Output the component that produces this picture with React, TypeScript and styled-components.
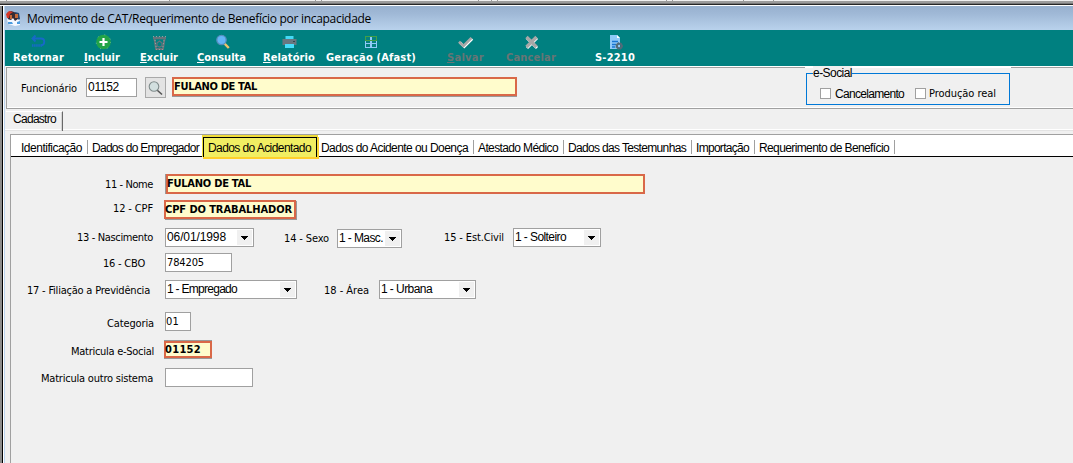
import React, { useLayoutEffect, useRef, useState } from "react";
import styled, { createGlobalStyle, css } from "styled-components";

const Global = createGlobalStyle`
  * { box-sizing: border-box; }
  html, body { margin: 0; padding: 0; background: #f0f0f0; overflow: hidden; }
`;

type Face = "ui" | "bold" | "sans" | "title";

const faces = {
  ui: css`font: 11px "DejaVu Sans Condensed", "DejaVu Sans", sans-serif; font-stretch: condensed; padding-top: 1px;`,
  bold: css`font: bold 11px "DejaVu Sans Condensed", "DejaVu Sans", sans-serif; font-stretch: condensed;`,
  sans: css`font: 12px "Liberation Sans", sans-serif;`,
  title: css`font: 12px "Open Sans", sans-serif; padding-top: 1px;`,
};

const TextBox = styled.span<{ $face: Face; $width: number }>`
  ${(p) => faces[p.$face]}
  display: block;
  flex: none;
  width: ${(p) => p.$width}px;
  line-height: 14px;
  white-space: nowrap;
`;

/* Text tracked so that it fills its fixed caption width. */
function Text({ face = "ui", width, children, accessKey }: { face?: Face; width: number; children: string; accessKey?: boolean }) {
  const ref = useRef<HTMLSpanElement>(null);
  const [tracking, setTracking] = useState(0);
  useLayoutEffect(() => {
    if (ref.current) {
      const natural = ref.current.getBoundingClientRect().width;
      setTracking((width - natural) / children.length);
    }
  }, [width, children]);
  return (
    <TextBox $face={face} $width={width}>
      <span ref={ref} style={{ letterSpacing: tracking }}>
        {accessKey ? <><u>{children[0]}</u>{children.slice(1)}</> : children}
      </span>
    </TextBox>
  );
}

const Screen = styled.div`
  width: 1073px;
  height: 463px;
  overflow: hidden;
  background: #f0f0f0;
  color: #000;
  display: flex;
  flex-direction: column;
`;
const Strip = styled.div`
  flex: none;
  height: 1px;
  display: flex;
  background: #f0f0f0;
`;
const Tick = styled.i<{ $gap: number }>`
  width: 1px;
  margin-left: ${(p) => p.$gap}px;
  background: #999;
`;
const TopEdge = styled.div`
  flex: none;
  height: 5px;
  background: linear-gradient(#9c9c9c 0 2px, #777 2px 3px, #262626 3px 4px, #fff 4px);
`;
const Frame = styled.div`
  flex: 1;
  display: flex;
  min-height: 0;
`;
const LeftEdge = styled.div`
  flex: none;
  width: 5px;
  background: linear-gradient(90deg, #8c8c8c 0 2px, #000 2px 3px, #fff 3px 4px, #bcd4ee 4px);
`;
const Window = styled.div`
  flex: 1;
  min-width: 0;
  display: flex;
  flex-direction: column;
`;
const TitleBar = styled.div`
  height: 24px;
  flex: none;
  display: flex;
  align-items: center;
  gap: 6px;
  padding-left: 1px;
  background: linear-gradient(#98b1cf 0, #9fb8d6 30%, #b9d2ec 100%);
`;
const Toolbar = styled.div`
  height: 36px;
  flex: none;
  display: flex;
  background: #008080;
`;
const Tool = styled.div<{ $gap: number; $disabled?: boolean }>`
  margin-left: ${(p) => p.$gap}px;
  padding-top: 4px;
  display: flex;
  flex-direction: column;
  align-items: center;
  color: ${(p) => (p.$disabled ? "#667575" : "#fff")};
  svg { display: block; height: 17px; width: 17px; }
`;
const EmployeePanel = styled.div`
  flex: none;
  height: 43px;
  display: flex;
  margin-left: 1px;
  border-top: 1px solid #fff;
  border-bottom: 1px solid #a0a0a0;
`;
const PanelInner = styled.div`
  flex: 1;
  display: flex;
  align-items: flex-start;
  border: solid #a0a0a0;
  border-width: 1px 0 0 1px;
  box-shadow: inset 0 -1px #fff;
  padding-left: 14px;
`;
const Slot = styled.div<{ $left?: number; $top?: number }>`
  flex: none;
  margin-left: ${(p) => p.$left ?? 0}px;
  margin-top: ${(p) => p.$top ?? 0}px;
`;
const Input = styled.div<{ $width: number; $pad?: number }>`
  flex: none;
  width: ${(p) => p.$width}px;
  height: 19px;
  padding: 1px 0 0 ${(p) => p.$pad ?? 1}px;
  background: #fff;
  border: 1px solid #a0a0a0;
`;
const Highlight = styled.div<{ $width: number; $height: number; $shadow: string; $pull?: boolean }>`
  flex: none;
  display: flex;
  align-items: center;
  width: ${(p) => p.$width}px;
  height: ${(p) => p.$height}px;
  background: #fffccc;
  border: 2px solid #d96848;
  box-shadow: ${(p) => p.$shadow};
  > span { margin-left: ${(p) => (p.$pull ? -1 : 0)}px; }
`;
const SearchButton = styled.div`
  width: 21px;
  height: 21px;
  background: #e3e3e3;
  border: 1px solid #a9a9a9;
  svg { display: block; }
`;
const GroupBack = styled.div`
  width: 206px;
  height: 39px;
  margin: -1px 0 0 288px;
  padding: 5px 1px 0;
  background: #f0f0f0;
  border-top: 1px solid #fff;
`;
const Group = styled.div`
  height: 32px;
  border: 1px solid #0078d7;
`;
const Legend = styled.div`
  width: 39px;
  height: 13px;
  margin: -8px 0 0 6px;
  background: #f0f0f0;
`;
const Checks = styled.div`
  display: flex;
  align-items: center;
  margin: 7px 0 0 13px;
`;
const Check = styled.i<{ $left?: number; $right: number }>`
  width: 11px;
  height: 11px;
  margin: 0 ${(p) => p.$right}px 0 ${(p) => p.$left ?? 0}px;
  background: #fff;
  border: 1px solid #a0a0a0;
`;
const OuterTabs = styled.div`
  flex: none;
  height: 22px;
  display: flex;
  border-bottom: 1px solid #e3e3e3;
  box-shadow: inset 0 -1px #fff;
`;
const OuterTab = styled.div`
  width: 57px;
  height: 20px;
  margin: 2px 0 0 1px;
  padding: 0 0 0 7px;
  border-top: 1px solid #fff;
  border-right: 1px solid #696969;
  box-shadow: inset -1px 0 #d5d5d5;
`;
const Page = styled.div`
  flex: 1;
  margin: 3px 0 0 5px;
  border: solid #a0a0a0;
  border-width: 1px 0 0 1px;
  display: flex;
  flex-direction: column;
`;
const TabStrip = styled.div`
  flex: none;
  height: 22px;
  display: flex;
  background: #fff;
  border-bottom: 1px solid #000;
`;
const Tab = styled.div<{ $width: number; $pad: number; $line?: boolean }>`
  flex: none;
  width: ${(p) => p.$width}px;
  height: 22px;
  padding: 6px 0 0 ${(p) => p.$pad}px;
  background: ${(p) => (p.$line ? "linear-gradient(#a0a0a0,#a0a0a0) right 5px / 1px 14px no-repeat" : "none")};
`;
const ActiveTab = styled.div`
  flex: none;
  position: relative;
  width: 114px;
  height: 20px;
  margin-top: 2px;
  padding: 3px 0 0 4px;
  background: #f1ee62;
  border: solid #000;
  border-width: 1px 1px 0 1px;
  box-shadow: 0 -1px 0 1px #f0dc38, 1px 1px 0 1px #ffcf2b;
`;
const Form = styled.div`
  flex: 1;
`;
const Row = styled.div<{ $top: number }>`
  display: flex;
  align-items: flex-start;
  padding-top: ${(p) => p.$top}px;
`;
const Caption = styled.div<{ $end: number; $gap: number; $top?: number }>`
  flex: none;
  width: ${(p) => p.$end}px;
  margin: ${(p) => p.$top ?? 2}px ${(p) => p.$gap}px 0 0;
  display: flex;
  justify-content: flex-end;
`;
const SelectBox = styled.div<{ $width: number }>`
  width: ${(p) => p.$width}px;
  height: 19px;
  display: flex;
  justify-content: space-between;
  padding: 1px 1px 1px 1px;
  background: #fff;
  border: 1px solid #a0a0a0;
`;
const Arrow = styled.div`
  width: 15px;
  height: 15px;
  background: #f0f0f0;
  svg { display: block; }
`;

function Select({ width, textWidth, children }: { width: number; textWidth: number; children: string }) {
  return (
    <SelectBox $width={width}>
      <Text face="sans" width={textWidth}>{children}</Text>
      <Arrow><svg width="15" height="15" shapeRendering="crispEdges"><path d="M4 6h7v1H10v1H9v1H8v1H7v-1H6V8H5V7H4z" /></svg></Arrow>
    </SelectBox>
  );
}

const AppIcon = () => (
  <svg width="15" height="17" viewBox="0 0 15 17">
    <path d="M1 3l4-2 3 1 5 2v7l-4 2H3z" fill="#382b32" />
    <path d="M0 4l3-3 4 1-3 2-1 4H1z" fill="#d83624" />
    <path d="M9 2l4 1 1 6-2 1z" fill="#25466d" />
    <path d="M4 5h2v4H4zM9 4h3v4H9z" fill="#c66a38" />
    <path d="M1 9l4 1 2-2 2 3 3-2 2 2v4l-5 1-7-2z" fill="#f4f8ff" />
    <path d="M2 12h4l1 2H2zM11 12l3-1v3h-3z" fill="#4a9be0" />
  </svg>
);
const BackIcon = () => (
  <svg viewBox="0 0 17 17" fill="none" stroke="#1769c8">
    <path d="M5.5 1.5L2.5 4.5l3 3M3 4.5h8q3.3 0 3.3 3.2t-3.3 3.8" strokeWidth="1.8" />
    <path d="M2 11.5h10" strokeWidth="2.4" strokeDasharray="1.5 .6" />
  </svg>
);
const AddIcon = () => (
  <svg viewBox="0 0 17 17">
    <circle cx="9.5" cy="8" r="7.3" fill="#22a447" />
    <circle cx="9.5" cy="8" r="7.3" fill="none" stroke="#c6dcc6" strokeWidth=".5" strokeDasharray="1 6" />
    <path d="M9.5 4v8M5.5 8h8" stroke="#fff" strokeWidth="2.2" />
  </svg>
);
const TrashIcon = () => (
  <svg viewBox="0 0 17 17" fill="none" stroke="#67737a">
    <path d="M2 4h13" strokeWidth="2.6" />
    <path d="M3.5 5l1.5 10h7l1.5-10" strokeWidth="1.8" />
    <path d="M6 9l2.5-2L11 9v3l-2.5 1L6 12z" strokeWidth="1.2" />
    <path d="M2 2.5h13M4 6l1.5 9.5h6L13 6" stroke="#d5c3bc" strokeWidth=".6" strokeDasharray="1 2" />
  </svg>
);
const FindIcon = () => (
  <svg viewBox="0 0 17 17">
    <path d="M11 9l4.8 5" stroke="#efc36a" strokeWidth="2.5" />
    <circle cx="8.5" cy="6" r="4.7" fill="#64b5f6" stroke="#558dbd" strokeWidth="1.3" />
  </svg>
);
const PrinterIcon = () => (
  <svg viewBox="0 0 17 17">
    <path d="M4.5 2h8v3h-8z" fill="#45d8f5" />
    <path d="M1.5 5h14v6h-14z" fill="#687780" />
    <path d="M4 10h9v4H4z" fill="#45dcfa" />
    <path d="M12 7.5h2" stroke="#37474f" />
  </svg>
);
const TableIcon = () => (
  <svg viewBox="0 0 17 17" shapeRendering="crispEdges">
    <path d="M2 2h12v12H2z" fill="#90caf9" />
    <path d="M2 2h12v1H2zM2 2h1v5H2zM13 2h1v5h-1zM2 6h12v1H2z" fill="#43a047" />
    <path d="M3 3h4v3H3zM9 3h4v3H9zM3 7h4v2H3zM9 7h4v2H9zM3 10h4v3H3zM9 10h4v3H9z" fill="#078080" />
  </svg>
);
const SaveIcon = () => (
  <svg viewBox="0 0 17 17" fill="none">
    <path d="M3 8.5l4.3 4.3 8-8" stroke="#fff" strokeWidth="2.5" />
    <path d="M2 7.7l4.5 4.2 8-8" stroke="#a7a7a7" strokeWidth="2.7" />
  </svg>
);
const CancelIcon = () => (
  <svg viewBox="0 0 17 17" fill="none">
    <path d="M4 4l10 10M14 4L4 14" stroke="#fff" strokeWidth="3" />
    <path d="M3.5 3l10 10M13.5 3l-10 10" stroke="#a7a7a7" strokeWidth="3.3" />
  </svg>
);
const DocIcon = () => (
  <svg viewBox="0 0 17 17">
    <path d="M3 1h7l3 3v11H3z" fill="#90caf9" />
    <path d="M10 1v3h3z" fill="#fff" />
    <path d="M5 7.5h6M5 10.5h4M5 13h3" stroke="#1976d2" strokeWidth="1.3" />
    <circle cx="12.2" cy="12" r="2.3" fill="none" stroke="#526b79" strokeWidth="2" />
    <circle cx="12.2" cy="12" r="3.4" fill="none" stroke="#526b79" strokeDasharray="1.4 1.4" />
  </svg>
);
const LensIcon = () => (
  <svg width="19" height="19" viewBox="0 0 19 19">
    <path d="M11 12l5 4.5" stroke="#555" strokeWidth="1.6" />
    <circle cx="8" cy="8.5" r="4.8" fill="#d2dfdf" stroke="#7f8b8b" strokeWidth="1.1" />
  </svg>
);

const ticks = [6, 162, 145, 5, 156, 12, 5, 168, 5, 70, 29];

export default function App() {
  return (
    <Screen>
      <Global />
      <Strip>{ticks.map((gap, i) => <Tick key={i} $gap={gap} />)}</Strip>
      <TopEdge />
      <Frame>
        <LeftEdge />
        <Window>
          <TitleBar>
            <AppIcon />
            <Text face="title" width={344}>Movimento de CAT/Requerimento de Benefício por incapacidade</Text>
          </TitleBar>
          <Toolbar>
            <Tool $gap={8}><BackIcon /><Text face="bold" width={51}>Retornar</Text></Tool>
            <Tool $gap={20}><AddIcon /><Text face="bold" width={36} accessKey>Incluir</Text></Tool>
            <Tool $gap={20}><TrashIcon /><Text face="bold" width={38} accessKey>Excluir</Text></Tool>
            <Tool $gap={19}><FindIcon /><Text face="bold" width={49} accessKey>Consulta</Text></Tool>
            <Tool $gap={17}><PrinterIcon /><Text face="bold" width={52} accessKey>Relatório</Text></Tool>
            <Tool $gap={11}><TableIcon /><Text face="bold" width={90}>Geração (Afast)</Text></Tool>
            <Tool $gap={31} $disabled><SaveIcon /><Text face="bold" width={37} accessKey>Salvar</Text></Tool>
            <Tool $gap={22} $disabled><CancelIcon /><Text face="bold" width={50}>Cancelar</Text></Tool>
            <Tool $gap={39}><DocIcon /><Text face="bold" width={40}>S-2210</Text></Tool>
          </Toolbar>
          <EmployeePanel>
            <PanelInner>
              <Slot $top={13}><Text width={56}>Funcionário</Text></Slot>
              <Slot $left={9} $top={10}><Input $width={51}><Text face="sans" width={31}>01152</Text></Input></Slot>
              <Slot $left={8} $top={9}><SearchButton><LensIcon /></SearchButton></Slot>
              <Slot $left={6} $top={9}>
                <Highlight $width={345} $height={19} $shadow="0 1px #999"><Text face="bold" width={83}>FULANO DE TAL</Text></Highlight>
              </Slot>
              <GroupBack>
                <Group>
                  <Legend><Text face="sans" width={39}>e-Social</Text></Legend>
                  <Checks>
                    <Check $right={4} /><Text face="sans" width={69}>Cancelamento</Text>
                    <Check $left={11} $right={3} /><Text width={67}>Produção real</Text>
                  </Checks>
                </Group>
              </GroupBack>
            </PanelInner>
          </EmployeePanel>
          <OuterTabs><OuterTab><Text face="sans" width={43}>Cadastro</Text></OuterTab></OuterTabs>
          <Page>
            <TabStrip>
              <Tab $width={77} $pad={10} $line><Text face="sans" width={61}>Identificação</Text></Tab>
              <Tab $width={115} $pad={4}><Text face="sans" width={107}>Dados do Empregador</Text></Tab>
              <ActiveTab><Text face="sans" width={103}>Dados do Acidentado</Text></ActiveTab>
              <Tab $width={157} $pad={4} $line><Text face="sans" width={147}>Dados do Acidente ou Doença</Text></Tab>
              <Tab $width={90} $pad={4} $line><Text face="sans" width={80}>Atestado Médico</Text></Tab>
              <Tab $width={128} $pad={4} $line><Text face="sans" width={118}>Dados das Testemunhas</Text></Tab>
              <Tab $width={63} $pad={4} $line><Text face="sans" width={53}>Importação</Text></Tab>
              <Tab $width={140} $pad={4} $line><Text face="sans" width={130}>Requerimento de Benefício</Text></Tab>
            </TabStrip>
            <Form>
              <Row $top={17}>
                <Caption $end={142} $gap={13} $top={3}><Text width={48}>11 - Nome</Text></Caption>
                <Highlight $width={479} $height={20} $shadow="-1px 0 #999" $pull><Text face="bold" width={84}>FULANO DE TAL</Text></Highlight>
              </Row>
              <Row $top={6}>
                <Caption $end={142} $gap={11} $top={1}><Text width={40}>12 - CPF</Text></Caption>
                <Highlight $width={132} $height={19} $shadow="1px 1px #999" $pull><Text face="bold" width={127}>CPF DO TRABALHADOR</Text></Highlight>
              </Row>
              <Row $top={9}>
                <Caption $end={142} $gap={12}><Text width={76}>13 - Nascimento</Text></Caption>
                <Select width={89} textWidth={59}>06/01/1998</Select>
                <Caption $end={75} $gap={8} $top={3}><Text width={45}>14 - Sexo</Text></Caption>
                <Slot $top={1}><Select width={65} textWidth={44}>1 - Masc.</Select></Slot>
                <Caption $end={102} $gap={9}><Text width={60}>15 - Est.Civil</Text></Caption>
                <Select width={88} textWidth={51}>1 - Solteiro</Select>
              </Row>
              <Row $top={5}>
                <Caption $end={134} $gap={20} $top={3}><Text width={42}>16 - CBO</Text></Caption>
                <Input $width={67}><Text width={37}>784205</Text></Input>
              </Row>
              <Row $top={8}>
                <Caption $end={139} $gap={15} $top={3}><Text width={123}>17 - Filiação a Previdência</Text></Caption>
                <Select width={132} textWidth={70}>1 - Empregado</Select>
                <Caption $end={72} $gap={10} $top={3}><Text width={45}>18 - Área</Text></Caption>
                <Select width={97} textWidth={51}>1 - Urbana</Select>
              </Row>
              <Row $top={13}>
                <Caption $end={143} $gap={11} $top={4}><Text width={47}>Categoria</Text></Caption>
                <Input $width={26} $pad={0}><Text width={13}>01</Text></Input>
              </Row>
              <Row $top={10}>
                <Caption $end={143} $gap={10} $top={3}><Text width={83}>Matricula e-Social</Text></Caption>
                <Highlight $width={48} $height={17} $shadow="0 -1px #999, 0 1px #999" $pull><Text face="bold" width={36}>01152</Text></Highlight>
              </Row>
              <Row $top={9}>
                <Caption $end={142} $gap={12} $top={3}><Text width={112}>Matricula outro sistema</Text></Caption>
                <Input $width={88} />
              </Row>
            </Form>
          </Page>
        </Window>
      </Frame>
    </Screen>
  );
}
